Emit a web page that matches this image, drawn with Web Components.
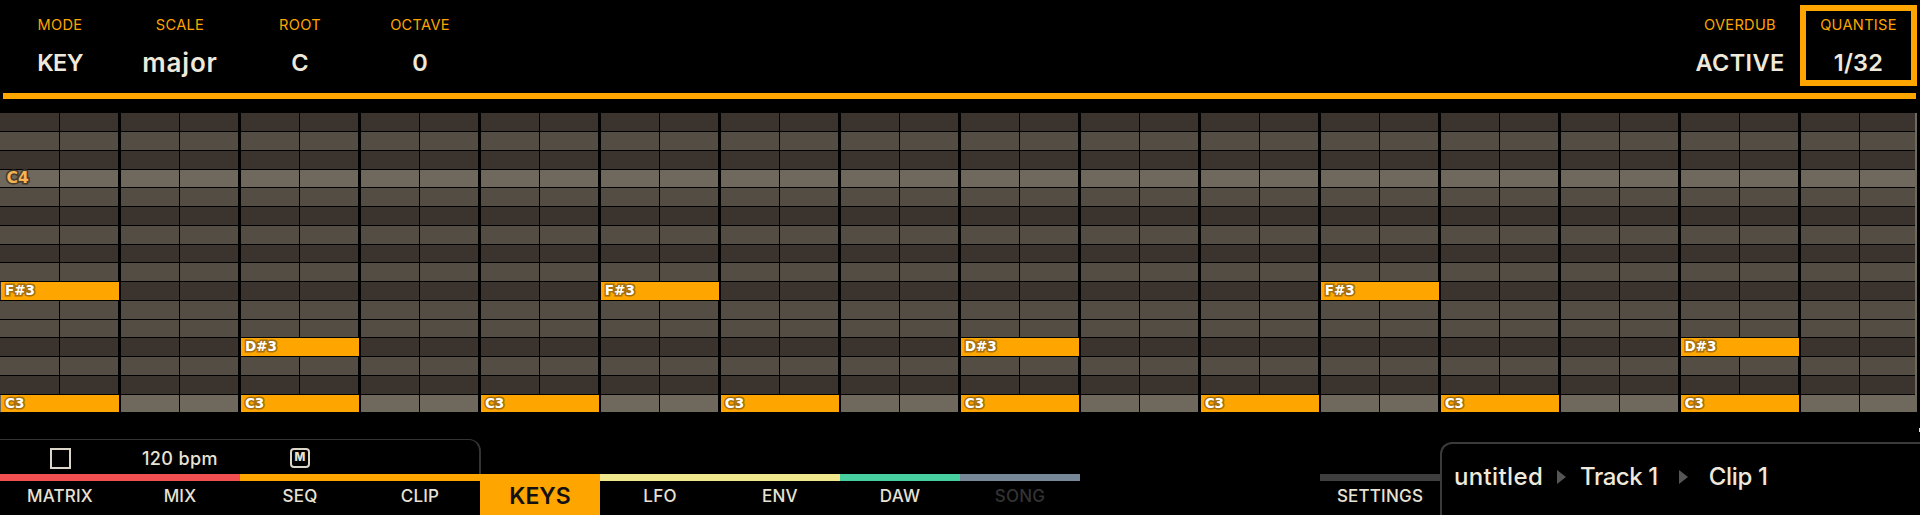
<!DOCTYPE html>
<html><head><meta charset="utf-8">
<style>
html,body{margin:0;padding:0;background:#000;width:1920px;height:515px;overflow:hidden}
body{font-family:"Inter","Liberation Sans",sans-serif;color:#efe9dc}
</style></head><body>
<keys-app>
  <top-bar slot="top">
    <param-cell slot="left" label="MODE" value="KEY" style="--ls:-.6px"></param-cell>
    <param-cell slot="left" label="SCALE" value="major" style="--vs:26px;--ls:.8px"></param-cell>
    <param-cell slot="left" label="ROOT" value="C"></param-cell>
    <param-cell slot="left" label="OCTAVE" value="0"></param-cell>
    <param-cell slot="right" label="OVERDUB" value="ACTIVE" style="--ls:.4px"></param-cell>
    <param-cell slot="right" label="QUANTISE" value="1/32" selected style="--ls:.3px"></param-cell>
  </top-bar>
  <key-grid slot="grid"></key-grid>
  <bottom-bar slot="bottom">
    <nav-tabs slot="nav">
      <transport-panel slot="transport"></transport-panel>
      <nav-tab slot="tabs" color="#f25050">MATRIX</nav-tab>
      <nav-tab slot="tabs" color="#f25050">MIX</nav-tab>
      <nav-tab slot="tabs" color="#ffa500">SEQ</nav-tab>
      <nav-tab slot="tabs" color="#ffa500">CLIP</nav-tab>
      <nav-tab slot="tabs" color="#ffa500" active>KEYS</nav-tab>
      <nav-tab slot="tabs" color="#f0e68c">LFO</nav-tab>
      <nav-tab slot="tabs" color="#f0e68c">ENV</nav-tab>
      <nav-tab slot="tabs" color="#48cfa0">DAW</nav-tab>
      <nav-tab slot="tabs" color="#778899" dim>SONG</nav-tab>
    </nav-tabs>
    <nav-tab slot="settings" color="#3f3f3f">SETTINGS</nav-tab>
    <bread-crumbs slot="crumbs">
      <span style="letter-spacing:.35px">untitled</span><crumb-sep style="--ml:14px;--mr:14px"></crumb-sep><span style="letter-spacing:-.45px">Track 1</span><crumb-sep style="--ml:21px;--mr:21px"></crumb-sep><span style="letter-spacing:-.3px">Clip 1</span>
    </bread-crumbs>
  </bottom-bar>
</keys-app>
<script>
function def(name, html, init){
  customElements.define(name, class extends HTMLElement{
    constructor(){super();this.attachShadow({mode:'open'}).innerHTML=html;}
    connectedCallback(){ if(init) init(this,this.shadowRoot); }
  });
}
def('keys-app',`<style>
:host{display:flex;flex-direction:column;position:relative;width:1920px;height:515px;background:#000}
.g{display:block;margin-top:14.25px}
.b{display:block;margin-top:auto}
.tick{position:absolute;right:0;top:428px;width:1px;height:4px;background:#e8e2d4}
</style><slot name="top"></slot><div class="g"><slot name="grid"></slot></div><div class="b"><slot name="bottom"></slot></div><div class="tick"></div>`);

def('top-bar',`<style>
:host{display:flex;justify-content:space-between;box-sizing:border-box;height:99px;margin:0 4px 0 3px;border-bottom:6px solid #ffa500;padding-top:5px}
.l{display:flex;margin-left:-3px}.r{display:flex;margin-right:-1px}
</style><div class="l"><slot name="left"></slot></div><div class="r"><slot name="right"></slot></div>`);

def('param-cell',`<style>
:host{display:flex;flex-direction:column;align-items:center;box-sizing:border-box;width:120px;height:81px;padding-top:10px;border:0 solid #ffa500}
:host([selected]){width:117px;border-width:6px;padding-top:4px}
.k{font-size:14.6px;line-height:20px;color:#ffa500;letter-spacing:.3px}
.v{font-size:var(--vs,23.5px);letter-spacing:var(--ls,0);font-weight:600;line-height:32px;margin-top:12px;color:#efe9dc}
</style><div class="k"></div><div class="v"></div>`,(h,s)=>{
  s.querySelector('.k').textContent=h.getAttribute('label');
  s.querySelector('.v').textContent=h.getAttribute('value');
});

def('key-grid',`<style>
:host{display:block;box-sizing:border-box;width:1917px;height:299px;overflow:hidden;border-right:2px solid #6e685d}
.grid{display:grid;grid-template-columns:repeat(32,59.985px);grid-template-rows:repeat(16,18.75px)}
.c{box-sizing:border-box;border-bottom:1px solid #000;background:#544d43}
.c.d{background:#3a332e}.c.w{background:#6e685d}
.c.a{border-left:1px solid #000;border-right:1px solid #000}
.c.a0{border-left:0}
.c.z{border-right:2px solid #000}
.n{box-sizing:border-box;display:flex;align-items:center;background:#ffa500;margin:0 1px 1px 1px;padding-left:4px;
 font:700 13.5px/1 "DejaVu Sans",sans-serif;color:#fff;-webkit-text-stroke:3.2px #a8700f;paint-order:stroke fill}
.lbl{display:flex;align-items:center;padding-left:6.5px;font:700 15.5px/1 "DejaVu Sans",sans-serif;color:#f6b455;-webkit-text-stroke:3.2px #453b2d;paint-order:stroke fill;margin-bottom:1px}
</style><div class="grid"></div>`,(h,s)=>{
  const g=s.querySelector('.grid');
  const kinds=['d','','d','w','','d','','d','','d','','','d','','d','w'];
  let html='';
  for(let r=0;r<16;r++)for(let c=0;c<32;c++){
    html+=`<div class="c ${kinds[r]} ${c%2?'z':(c?'a':'a a0')}" style="grid-row:${r+1};grid-column:${c+1}"></div>`;
  }
  const notes=[[15,0,'C3'],[15,4,'C3'],[15,8,'C3'],[15,12,'C3'],[15,16,'C3'],[15,20,'C3'],[15,24,'C3'],[15,28,'C3'],
    [9,0,'F#3'],[9,10,'F#3'],[9,22,'F#3'],[12,4,'D#3'],[12,16,'D#3'],[12,28,'D#3']];
  for(const [r,c,t] of notes)html+=`<div class="n" style="grid-row:${r+1};grid-column:${c+1}/span 2">${t}</div>`;
  html+=`<div class="lbl" style="grid-row:4;grid-column:1/span 2">C4</div>`;
  g.innerHTML=html;
});

def('bottom-bar',`<style>
:host{display:flex;align-items:flex-end;height:76px}
.n{display:block;width:1320px}.s{display:block;width:120px}.c{display:block;flex:1}
</style><div class="n"><slot name="nav"></slot></div><div class="s"><slot name="settings"></slot></div><div class="c"><slot name="crumbs"></slot></div>`);

def('nav-tabs',`<style>
:host{display:block}
.t{display:flex}
</style><slot name="transport"></slot><div class="t"><slot name="tabs"></slot></div>`);

def('transport-panel',`<style>
:host{display:grid;grid-template-columns:repeat(4,120px);box-sizing:border-box;width:481px;height:35px;border:solid #333;border-width:1px 2px 0 0;border-top-right-radius:12px;align-items:center;justify-items:center;color:#e8e2d4;padding-top:2px}
.stop{box-sizing:border-box;width:21px;height:21px;border:2.5px solid #dcd6c8}
.bpm{font-size:18px;letter-spacing:.4px;font-weight:500}
.m{box-sizing:border-box;width:20px;height:20px;border:2.5px solid #dcd6c8;border-radius:4px;display:flex;align-items:center;justify-content:center;font-size:11.5px;font-weight:800;line-height:1}
</style><div class="stop"></div><div class="bpm">120 bpm</div><div class="m">M</div>`);

def('nav-tab',`<style>
:host{display:flex;flex-direction:column;width:120px;height:41px;box-sizing:border-box;border-top:7px solid var(--c);padding-bottom:5px;align-items:center;justify-content:center;font-size:17px;letter-spacing:.2px;font-weight:500;color:#e8e2d4}
:host([active]){background:#ffa500;color:#111;font-size:23px;font-weight:600;letter-spacing:0}
:host([dim]){color:#333}
</style><slot></slot>`,(h)=>{h.style.setProperty('--c',h.getAttribute('color'));});

def('bread-crumbs',`<style>
:host{display:flex;box-sizing:border-box;height:73px;border:solid #3a3a3a;border-width:2px 0 0 2px;border-top-left-radius:12px;padding:19px 0 0 12px;align-items:flex-start;font-size:24px;font-weight:500;line-height:28px;color:#efe9dc}
</style><slot></slot>`);

def('crumb-sep',`<style>
:host{display:block;height:28px;margin:0 var(--mr,13px) 0 var(--ml,15px)}
svg{display:block;width:9px;height:14px;margin-top:7px}
</style><svg viewBox="0 0 9 14"><path d="M0 0 L9 7 L0 14Z" fill="#555"/></svg>`);
</script>
</body></html>
